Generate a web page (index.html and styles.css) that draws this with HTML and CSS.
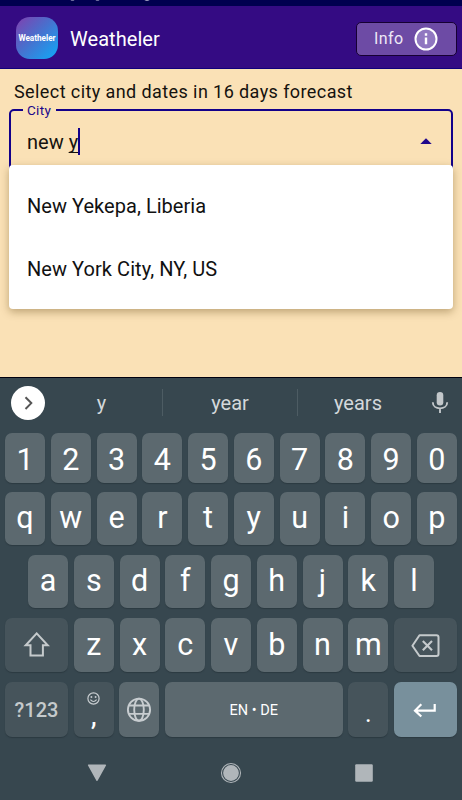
FILE: index.html
```html
<!DOCTYPE html>
<html lang="en">
<head>
<meta charset="utf-8">
<title>Weatheler</title>
<link rel="stylesheet" href="styles.css">
</head>
<body>
<div class="phone">
  <div class="status">
    <svg width="170" height="6" viewBox="0 0 170 6" fill="none" stroke="#d8d8e8" stroke-width="1.5"><path d="M69-2.2q3.5 4 7 0M94-2.2q3.5 4 7 0M142-3q5 6 10 0"/></svg>
  </div>
  <header class="appbar">
    <div class="logo">Weatheler</div>
    <h1 class="title">Weatheler</h1>
    <button class="info"><span>Info</span>
      <svg width="24" height="24" viewBox="0 0 24 24"><circle cx="12" cy="12" r="10.5" fill="#9077c0" stroke="#fff" stroke-width="2"/><path d="M12 10.5v6.8M12 6.3v2.4" stroke="#fff" stroke-width="2.4"/></svg>
    </button>
  </header>
  <main class="content">
    <p class="lead">Select city and dates in 16 days forecast</p>
    <div class="field">
      <span class="field-label">City</span>
      <span class="value">new <u>y</u></span><span class="caret"></span>
      <svg class="arrow" width="12" height="6" viewBox="0 0 12 6"><path d="M0.3 6L6 .2 11.7 6z" fill="#20078b"/></svg>
      <div class="menu">
        <div class="option first">New Yekepa, Liberia</div>
        <div class="option second">New York City, NY, US</div>
      </div>
    </div>
  </main>
  <section class="keyboard">
    <div class="suggest">
      <span class="expand"><svg width="34" height="34" viewBox="0 0 34 34"><path d="M14.5 11.2l5.8 5.9-5.8 5.9" fill="none" stroke="#555" stroke-width="2"/></svg></span>
      <span class="word one">y</span>
      <span class="word two">year</span>
      <span class="word three">years</span>
      <svg class="mic" width="18" height="24" viewBox="0 0 18 24"><rect x="5.7" y="1" width="6.6" height="13.5" rx="3.3" fill="#c2c7ca"/><path d="M1.8 11.2c0 8.2 14.4 8.2 14.4 0M9 17.3v4.6" fill="none" stroke="#c2c7ca" stroke-width="1.9"/></svg>
    </div>
    <div class="row r1"><b>1</b><b>2</b><b>3</b><b>4</b><b>5</b><b>6</b><b>7</b><b>8</b><b>9</b><b>0</b></div>
    <div class="row r2"><b>q</b><b>w</b><b>e</b><b>r</b><b>t</b><b>y</b><b>u</b><b>i</b><b>o</b><b>p</b></div>
    <div class="row r3"><b>a</b><b>s</b><b>d</b><b>f</b><b>g</b><b>h</b><b>j</b><b>k</b><b>l</b></div>
    <div class="row r4">
      <b class="wide dim"><svg width="28" height="26" viewBox="0 0 28 26"><path d="M13.7 1.4L24.7 13.2H19.9V23.4H7.5V13.2H2.7z" fill="none" stroke="#c5cacc" stroke-width="2"/></svg></b>
      <b>z</b><b>x</b><b>c</b><b>v</b><b>b</b><b>n</b><b>m</b>
      <b class="wide dim"><svg width="30" height="24" viewBox="0 0 30 24"><path d="M8.5 2.3H25.5Q27.5 2.3 27.5 4.3V21Q27.5 23 25.5 23H8.5L1.4 12.7z" fill="none" stroke="#c5cacc" stroke-width="2" stroke-linejoin="round"/><path d="M11.8 8l9.2 9.2M21 8l-9.2 9.2" stroke="#c5cacc" stroke-width="2.1"/></svg></b>
    </div>
    <div class="row r5">
      <b class="wide dim sym">?123</b>
      <b class="dim comma"><svg width="14" height="14" viewBox="0 0 14 14"><circle cx="6.5" cy="6.5" r="5.6" fill="none" stroke="#c8cdd0" stroke-width="1.2"/><circle cx="4.4" cy="5" r=".95" fill="#c8cdd0"/><circle cx="8.6" cy="5" r=".95" fill="#c8cdd0"/><path d="M3.4 7.7q3.1 3.6 6.2 0" fill="none" stroke="#c8cdd0" stroke-width="1.1"/></svg><i>,</i></b>
      <b><svg width="26" height="26" viewBox="0 0 26 26" fill="none" stroke="#c8cdd0" stroke-width="1.9"><circle cx="13" cy="12.7" r="11.1"/><ellipse cx="13" cy="12.7" rx="4.8" ry="11.1"/><path d="M3 8.5h20M3 16.9h20"/></svg></b>
      <b class="space">EN • DE</b>
      <b class="dim dot"><i>.</i></b>
      <b class="wide enter"><svg width="24" height="16" viewBox="0 0 24 16"><path d="M21.7 2v6.6H2.5M8.3 2.2L2 8.6l6.3 5.9" fill="none" stroke="#fff" stroke-width="2.2"/></svg></b>
    </div>
    <nav class="nav">
      <svg width="22" height="22" viewBox="0 0 22 22"><path d="M2.7 3.2H19.3L11 18.2z" fill="#b0b6ba" stroke="#b0b6ba" stroke-width="1.6" stroke-linejoin="round"/></svg>
      <svg width="22" height="22" viewBox="0 0 22 22"><circle cx="11" cy="11" r="9.5" fill="none" stroke="#b0b6ba" stroke-width="1.1"/><circle cx="11" cy="11" r="7.9" fill="#b0b6ba"/></svg>
      <svg width="22" height="22" viewBox="0 0 22 22"><rect x="2.2" y="2.2" width="17.6" height="17.6" rx="1.2" fill="#b0b6ba"/></svg>
    </nav>
  </section>
</div>
</body>
</html>
```
FILE: styles.css
```css
* { box-sizing: border-box; }
body { margin: 0; font-family: Roboto, sans-serif; }
.phone { width: 462px; height: 800px; display: flex; flex-direction: column; overflow: hidden; }
.status { height: 6px; background: #00004f; }
.status svg { display: block; }
.appbar {
  height: 63px; background: #340b83; border-bottom: 1px solid #10007c;
  display: flex; align-items: center; padding: 1px 5px 0 16px;
}
.logo {
  width: 42px; height: 42px; border-radius: 14px; margin-top: 1px;
  background: linear-gradient(135deg, #7b45b2 5%, #496fcd 45%, #14a5f5 95%);
  color: #fff; font-size: 8.2px; font-weight: 700; line-height: 42px; text-align: center;
}
.title { margin: 2px 0 0 12px; color: #fff; font-size: 20px; font-weight: 400; letter-spacing: .05px; }
.info {
  margin: 2px 0 0 auto; width: 101px; height: 34px; border: 1px solid #160033; border-radius: 5px;
  background: #6d4ba5; color: #eee8f6; font: 400 16px Roboto, sans-serif; letter-spacing: .45px;
  display: flex; align-items: center; padding: 0 0 0 17px; gap: 10px;
}
.content { height: 309px; background: #fae1b6; border-bottom: 1px solid #00000f; padding: 12px 9px 0; }
.lead { margin: 0 0 0 5px; font-size: 18px; line-height: 22px; letter-spacing: .41px; color: #15120e; white-space: nowrap; }
.field {
  position: relative; margin-top: 6px; height: 64px; border: 2px solid #12008a; border-radius: 5px;
  display: flex; align-items: center; padding: 2px 0 0 16px; font-size: 20px; color: #15120e;
}
.field-label {
  position: absolute; left: 12px; top: -9px; padding: 0 5px 0 4px; background: #fae1b6;
  font-size: 13.5px; line-height: 17px; letter-spacing: .3px; color: #20078b;
}
.value u { text-decoration-thickness: 1px; text-underline-offset: 3px; text-decoration-skip-ink: none; }
.caret { width: 2px; height: 27px; background: #12008a; margin-top: -2px; }
.arrow { margin: -3px 19px 0 auto; }
.menu {
  position: absolute; left: -2px; right: -2px; top: 54px; height: 143.5px; background: #fff;
  border-radius: 4px; box-shadow: 0 3px 8px rgba(90, 60, 10, .38); padding: 9px 18px;
}
.option { height: 63px; line-height: 65px; color: #111; white-space: nowrap; }
.first { letter-spacing: .04px; }
.second { letter-spacing: .06px; }
.keyboard { flex: 1; background: #37474f; padding: 0 5px; }
.suggest { height: 55.3px; display: flex; align-items: center; color: #d3d8db; font-size: 20px; padding: 0 8px 6px 6px; }
.expand { width: 34px; height: 34px; border-radius: 50%; background: #fff; }
.expand svg { display: block; }
.word { text-align: center; height: 27px; line-height: 28px; }
.one { width: 118px; padding-right: 4px; border-right: 1px solid #4d5c63; }
.two { width: 135px; border-right: 1px solid #4d5c63; }
.three { width: 120px; }
.mic { margin-left: auto; }
.row { display: flex; justify-content: space-between; }
.row b {
  width: 40px; height: 100%; border-radius: 7px; background: #5c696f; color: #fff;
  box-shadow: 0 1px 1px #2c3a41; font-size: 30.5px; font-weight: 400;
  display: flex; align-items: center; justify-content: center; padding-top: 2px;
}
.row i { font-style: normal; }
.r1 { height: 49.7px; }
.r2 { height: 53.2px; margin-top: 9px; }
.r2 b, .r3 b { padding: 0 0 2px; }
.r4 b { padding: 0 0 1px; }
.r3 { height: 53.5px; margin: 9.8px 23px 0; }
.r4 { height: 53.5px; margin-top: 9.8px; }
.r5 { height: 55.3px; margin-top: 9.8px; }
.row .wide { width: 63px; }
.row .dim { background: #46545b; }
.row .sym { color: #c5cacc; font-size: 20px; font-weight: 500; letter-spacing: 0; }
.row .comma { flex-direction: column; justify-content: flex-start; padding-top: 10px; }
.comma i { font-size: 25px; line-height: 22px; font-weight: 500; }
.row .space { width: 177.6px; font-size: 14.5px; }
.row .dot { padding-top: 9px; font-size: 25px; }
.row .enter { background: #78909c; }
.nav { display: flex; justify-content: space-between; padding: 25px 81px 0; }
.nav svg:last-child { margin-right: 1px; }
```
